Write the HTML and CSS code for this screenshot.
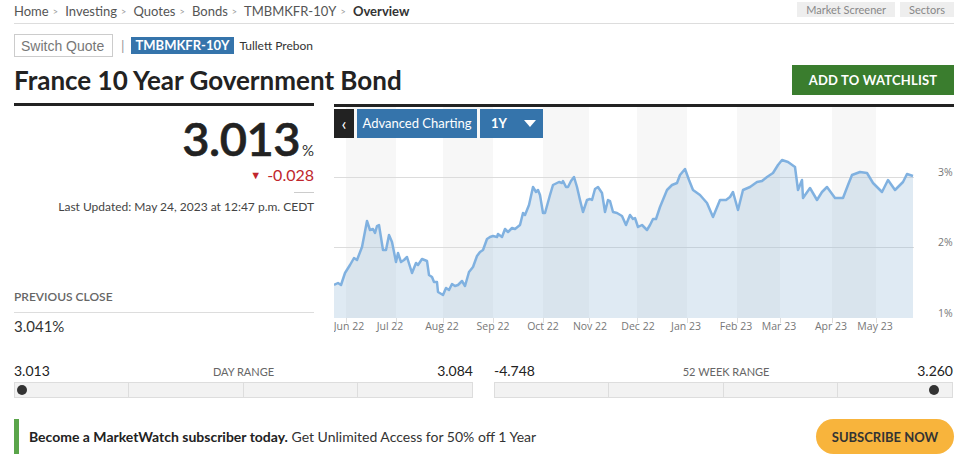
FILE: index.html
```html
<!DOCTYPE html>
<html lang="en">
<head>
  <meta charset="UTF-8">
  <title>France 10 Year Government Bond</title>
  <link rel="stylesheet" href="styles.css">
</head>
<body>
  <div class="page">
    <div class="topbar">
      <nav class="crumbs">
        <span>Home</span><span class="sep">&gt;</span>
        <span>Investing</span><span class="sep">&gt;</span>
        <span>Quotes</span><span class="sep">&gt;</span>
        <span>Bonds</span><span class="sep">&gt;</span>
        <span>TMBMKFR-10Y</span><span class="sep">&gt;</span>
        <b>Overview</b>
      </nav>
      <div class="tools">
        <span class="tool">Market Screener</span>
        <span class="tool">Sectors</span>
      </div>
    </div>

    <div class="quote-row">
      <input class="switch" type="text" placeholder="Switch Quote">
      <span class="pipe">|</span>
      <span class="ticker">TMBMKFR-10Y</span>
      <span class="source">Tullett Prebon</span>
    </div>

    <div class="title-row">
      <h1>France 10 Year Government Bond</h1>
      <button class="watch">ADD TO WATCHLIST</button>
    </div>

    <div class="main">
      <div class="quote">
        <div class="price">3.013<small>%</small></div>
        <div class="change"><span class="arrow">&#9660;</span> -0.028</div>
        <div class="rule"></div>
        <div class="updated">Last Updated: May 24, 2023 at 12:47 p.m. CEDT</div>
        <div class="prev-label">PREVIOUS CLOSE</div>
        <div class="prev-value">3.041%</div>
      </div>

      <div class="chart">
        <div class="chart-tools">
          <span class="back">&lsaquo;</span>
          <span class="adv">Advanced Charting</span>
          <span class="period">1Y <span class="caret"></span></span>
        </div>
        <svg class="plot" width="620" height="230" viewBox="0 0 620 230">
          <g fill="#f7f7f7">
            <rect x="12" y="0" width="50" height="211"/>
            <rect x="109" y="0" width="50" height="211"/>
            <rect x="209" y="0" width="46" height="211"/>
            <rect x="303" y="0" width="50" height="211"/>
            <rect x="403" y="0" width="43" height="211"/>
            <rect x="498" y="0" width="44" height="211"/>
          </g>
          <g stroke="#dcdcdc" stroke-width="1">
            <line x1="0" y1="70.5" x2="580" y2="70.5"/>
            <line x1="0" y1="140.5" x2="580" y2="140.5"/>
          </g>
          <path fill="rgba(150,186,214,0.3)" d="M0,178 L4,176 L7,178 L11,166 L16,158 L20,151 L23,153 L28,140 L33,114 L36,123 L39,122 L41,126 L43,119 L45,118 L49,143 L52,143 L55,128 L58,135 L62,155 L64,146 L67,155 L70,153 L73,150 L78,166 L82,156 L84,158 L88,152 L93,154 L95,168 L98,170 L100,175 L103,175 L104,185 L109,188 L112,181 L115,183 L118,177 L121,179 L124,178 L128,174 L131,179 L135,165 L139,160 L143,149 L146,145 L149,143 L153,132 L156,130 L159,129 L163,130 L164,127 L168,130 L171,122 L174,125 L178,121 L181,122 L186,118 L189,106 L191,108 L195,98 L199,80 L202,85 L204,83 L206,88 L209,106 L211,106 L216,88 L219,78 L223,76 L225,75 L228,76 L229,74 L232,80 L234,80 L237,74 L240,70 L243,80 L246,93 L249,105 L253,93 L256,92 L258,93 L261,82 L264,80 L268,86 L271,105 L274,93 L276,94 L279,105 L283,106 L288,109 L292,118 L296,108 L299,112 L301,111 L304,120 L308,118 L313,123 L316,118 L319,112 L322,112 L326,100 L333,83 L338,78 L343,76 L346,68 L351,62 L355,73 L359,83 L366,88 L373,96 L379,110 L386,93 L392,93 L396,90 L399,85 L404,103 L409,83 L416,80 L423,75 L428,74 L433,70 L439,66 L444,58 L448,53 L454,55 L461,60 L464,83 L468,73 L469,91 L476,81 L483,93 L488,85 L493,80 L501,91 L509,91 L514,78 L518,68 L526,65 L533,66 L539,76 L544,81 L548,85 L554,73 L561,83 L569,75 L573,67 L579,69 L579,211 L0,211 Z"/>
          <path fill="none" stroke="#80b1e0" stroke-width="2.5" stroke-linejoin="round" d="M0,178 L4,176 L7,178 L11,166 L16,158 L20,151 L23,153 L28,140 L33,114 L36,123 L39,122 L41,126 L43,119 L45,118 L49,143 L52,143 L55,128 L58,135 L62,155 L64,146 L67,155 L70,153 L73,150 L78,166 L82,156 L84,158 L88,152 L93,154 L95,168 L98,170 L100,175 L103,175 L104,185 L109,188 L112,181 L115,183 L118,177 L121,179 L124,178 L128,174 L131,179 L135,165 L139,160 L143,149 L146,145 L149,143 L153,132 L156,130 L159,129 L163,130 L164,127 L168,130 L171,122 L174,125 L178,121 L181,122 L186,118 L189,106 L191,108 L195,98 L199,80 L202,85 L204,83 L206,88 L209,106 L211,106 L216,88 L219,78 L223,76 L225,75 L228,76 L229,74 L232,80 L234,80 L237,74 L240,70 L243,80 L246,93 L249,105 L253,93 L256,92 L258,93 L261,82 L264,80 L268,86 L271,105 L274,93 L276,94 L279,105 L283,106 L288,109 L292,118 L296,108 L299,112 L301,111 L304,120 L308,118 L313,123 L316,118 L319,112 L322,112 L326,100 L333,83 L338,78 L343,76 L346,68 L351,62 L355,73 L359,83 L366,88 L373,96 L379,110 L386,93 L392,93 L396,90 L399,85 L404,103 L409,83 L416,80 L423,75 L428,74 L433,70 L439,66 L444,58 L448,53 L454,55 L461,60 L464,83 L468,73 L469,91 L476,81 L483,93 L488,85 L493,80 L501,91 L509,91 L514,78 L518,68 L526,65 L533,66 L539,76 L544,81 L548,85 L554,73 L561,83 L569,75 L573,67 L579,69"/>
          <g stroke="#dddddd" stroke-width="1">
            <line x1="12.5" y1="211" x2="12.5" y2="216"/>
            <line x1="62.5" y1="211" x2="62.5" y2="216"/>
            <line x1="109.5" y1="211" x2="109.5" y2="216"/>
            <line x1="159.5" y1="211" x2="159.5" y2="216"/>
            <line x1="209.5" y1="211" x2="209.5" y2="216"/>
            <line x1="255.5" y1="211" x2="255.5" y2="216"/>
            <line x1="303.5" y1="211" x2="303.5" y2="216"/>
            <line x1="353.5" y1="211" x2="353.5" y2="216"/>
            <line x1="403.5" y1="211" x2="403.5" y2="216"/>
            <line x1="446.5" y1="211" x2="446.5" y2="216"/>
            <line x1="498.5" y1="211" x2="498.5" y2="216"/>
            <line x1="542.5" y1="211" x2="542.5" y2="216"/>
          </g>
          <g class="axis" text-anchor="middle">
            <text x="15" y="223">Jun 22</text>
            <text x="56" y="223">Jul 22</text>
            <text x="108" y="223">Aug 22</text>
            <text x="159" y="223">Sep 22</text>
            <text x="209" y="223">Oct 22</text>
            <text x="256" y="223">Nov 22</text>
            <text x="304" y="223">Dec 22</text>
            <text x="352" y="223">Jan 23</text>
            <text x="402" y="223">Feb 23</text>
            <text x="445" y="223">Mar 23</text>
            <text x="497" y="223">Apr 23</text>
            <text x="541" y="223">May 23</text>
          </g>
          <g class="axis">
            <text x="604" y="69">3%</text>
            <text x="604" y="139">2%</text>
            <text x="604" y="210">1%</text>
          </g>
        </svg>
      </div>
    </div>

    <div class="ranges">
      <div class="range">
        <div class="range-head">
          <span class="val">3.013</span>
          <span class="name">DAY RANGE</span>
          <span class="val">3.084</span>
        </div>
        <div class="bar">
          <span></span><span></span><span></span><span></span>
          <i class="dot" style="left: 2px"></i>
        </div>
      </div>
      <div class="range">
        <div class="range-head">
          <span class="val">-4.748</span>
          <span class="name">52 WEEK RANGE</span>
          <span class="val">3.260</span>
        </div>
        <div class="bar">
          <span></span><span></span><span></span><span></span>
          <i class="dot" style="left: 434px"></i>
        </div>
      </div>
    </div>

    <div class="promo">
      <p><b>Become a MarketWatch subscriber today.</b> Get Unlimited Access for 50% off 1 Year</p>
      <button class="subscribe">SUBSCRIBE NOW</button>
    </div>
  </div>
</body>
</html>
```

FILE: styles.css
```css
body { margin: 0; font-family: Lato, "Open Sans", Arial, sans-serif; color: #222; background: #fff; }
.page { width: 940px; padding: 0 14px; }

/* top bar */
.topbar { display: flex; justify-content: space-between; height: 23px; border-bottom: 1px solid #ddd; }
.crumbs { font-size: 13px; line-height: 16px; padding-top: 3px; color: #555; }
.crumbs b { color: #333; }
.crumbs .sep { color: #999; font-size: 9px; margin: 0 4px; position: relative; top: -1px; }
.tools { display: flex; gap: 5px; padding-top: 2px; }
.tool { background: #eee; color: #888; font-size: 11px; line-height: 15px; height: 15px; padding: 0 9px; }

/* quote row */
.quote-row { display: flex; align-items: center; margin-top: 10px; height: 23px; }
.switch { box-sizing: border-box; width: 99px; height: 23px; border: 1px solid #ccc; padding: 0 6px; font: 14px "Liberation Sans", Arial, sans-serif; color: #777; }
.switch::placeholder { color: #777; }
.pipe { color: #999; font-size: 14px; margin: 0 6px 0 8px; }
.ticker { background: #3574ab; color: #fff; font-weight: 700; font-size: 13px; line-height: 17px; padding: 0 5px; white-space: nowrap; }
.source { font-size: 12px; color: #333; margin-left: 5px; }

/* title */
.title-row { display: flex; justify-content: space-between; align-items: center; margin-top: 8px; height: 30px; }
h1 { margin: 0; font-size: 26px; line-height: 30px; font-weight: 700; color: #222; }
.watch { width: 162px; height: 30px; border: none; background: #3a7d2e; color: #fff; font: 700 13px Lato, sans-serif; letter-spacing: 0.2px; }

/* main block */
.main { display: flex; gap: 20px; margin-top: 8px; }
.quote { width: 300px; border-top: 3px solid #222; text-align: right; padding-top: 9px; }
.price { font-size: 47px; line-height: 47px; font-weight: 600; color: #222; letter-spacing: -0.5px; -webkit-text-stroke: 0.6px #222; }
.price small { font-size: 15px; line-height: 1; font-weight: 400; letter-spacing: 0; margin-left: 2px; color: #333; -webkit-text-stroke: 0; }
.change { margin-top: 3px; font-size: 16px; line-height: 20px; color: #c0262d; }
.change .arrow { font-size: 11px; line-height: 1; position: relative; top: -2px; margin-right: 2px; }
.rule { width: 20px; height: 1px; background: #ccc; margin: 7px 0 0 auto; }
.updated { margin-top: 6px; font-size: 12px; line-height: 16px; color: #444; }
.prev-label { margin-top: 74px; text-align: left; font-size: 12px; line-height: 16px; color: #666; font-weight: 600; padding-bottom: 7px; border-bottom: 1px solid #ddd; }
.prev-value { margin-top: 3px; text-align: left; font-size: 15px; line-height: 20px; color: #333; }

.chart { flex: 1; margin-top: 1px; border-top: 3px solid #222; position: relative; height: 230px; }
.plot { display: block; }
.axis { font-family: "Open Sans", sans-serif; font-size: 10.5px; fill: #777; }
.chart-tools { position: absolute; top: 2px; left: 0; display: flex; gap: 3px; height: 29px; }
.chart-tools span { color: #fff; font-size: 13px; line-height: 29px; }
.back { background: #222; width: 20px; text-align: center; font-size: 18px !important; }
.adv { background: #3574ab; width: 120px; text-align: center; }
.period { background: #3574ab; width: 63px; box-sizing: border-box; padding-left: 11px; font-weight: 700; display: flex; align-items: center; }
.caret { width: 0; height: 0; border-left: 6px solid transparent; border-right: 6px solid transparent; border-top: 7px solid #fff; margin-left: 17px; }

/* ranges */
.ranges { display: flex; gap: 21px; margin-top: 25px; }
.range { width: 459px; }
.range-head { display: flex; justify-content: space-between; align-items: baseline; }
.range-head .val { font-size: 14px; line-height: 18px; color: #222; }
.range-head .name { font-size: 11px; color: #666; }
.bar { position: relative; margin-top: 2px; display: grid; grid-template-columns: repeat(4, 1fr); height: 14px; border: 1px solid #ddd; background: #f2f2f2; }
.bar span { border-right: 1px solid #ddd; }
.bar span:last-of-type { border-right: none; }
.dot { position: absolute; top: 2px; width: 10px; height: 10px; border-radius: 50%; background: #333; }

/* promo */
.promo { display: flex; justify-content: space-between; align-items: center; margin-top: 21px; height: 35px; border-left: 5px solid #5aa54a; }
.promo p { margin: 0 0 0 10px; font-size: 14px; color: #333; }
.promo p b { color: #222; }
.subscribe { width: 138px; height: 35px; border: none; border-radius: 18px; background: #f8b43c; color: #333; font: 700 13px Lato, sans-serif; }
```
